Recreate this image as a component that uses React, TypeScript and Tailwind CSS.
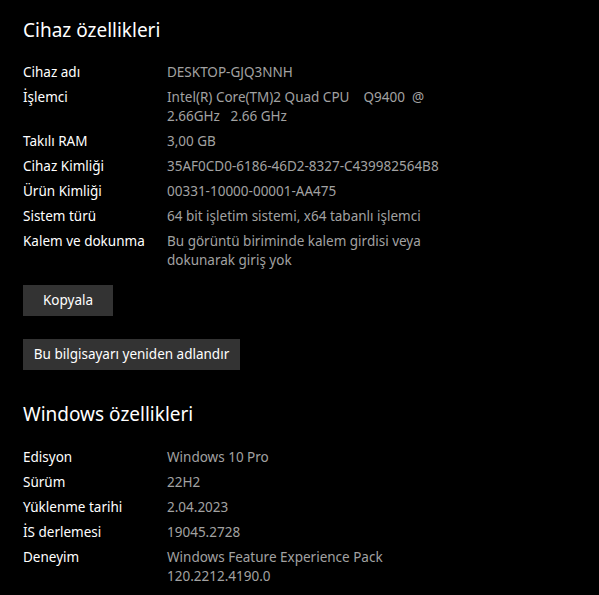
const device: { label: string; value: React.ReactNode }[] = [
  { label: 'Cihaz adı', value: 'DESKTOP-GJQ3NNH' },
  {
    label: 'İşlemci',
    value: (
      <>
        {'Intel(R) Core(TM)2 Quad CPU    Q9400  @'}
        <br />
        {'2.66GHz   2.66 GHz'}
      </>
    ),
  },
  { label: 'Takılı RAM', value: '3,00 GB' },
  { label: 'Cihaz Kimliği', value: '35AF0CD0-6186-46D2-8327-C439982564B8' },
  { label: 'Ürün Kimliği', value: '00331-10000-00001-AA475' },
  { label: 'Sistem türü', value: '64 bit işletim sistemi, x64 tabanlı işlemci' },
  {
    label: 'Kalem ve dokunma',
    value: (
      <>
        Bu görüntü biriminde kalem girdisi veya
        <br />
        dokunarak giriş yok
      </>
    ),
  },
];

const windows: { label: string; value: React.ReactNode }[] = [
  { label: 'Edisyon', value: 'Windows 10 Pro' },
  { label: 'Sürüm', value: '22H2' },
  { label: 'Yüklenme tarihi', value: '2.04.2023' },
  { label: 'İS derlemesi', value: '19045.2728' },
  {
    label: 'Deneyim',
    value: (
      <>
        Windows Feature Experience Pack
        <br />
        120.2212.4190.0
      </>
    ),
  },
];

function InfoRows({ rows }: { rows: { label: string; value: React.ReactNode }[] }) {
  return (
    <div className="flex flex-col gap-[6px]">
      {rows.map((row) => (
        <div key={row.label} className="flex text-[13.5px] leading-[19px]">
          <div className="w-[144px] flex-shrink-0 text-white">{row.label}</div>
          <div className="text-[#a2a2a2] whitespace-pre">{row.value}</div>
        </div>
      ))}
    </div>
  );
}

export default function App() {
  return (
    <div
      className="w-[599px] h-[595px] bg-black overflow-hidden pl-[23px] pt-[16px]"
      style={{ fontFamily: '"Noto Sans", "Open Sans", sans-serif' }}
    >
      <h1 className="text-[19px] leading-[28px] text-white">Cihaz özellikleri</h1>

      <div className="mt-[19px]">
        <InfoRows rows={device} />
      </div>

      <button className="mt-[15px] block w-[90px] h-[31px] bg-[#333333] text-white text-[13.5px]">
        Kopyala
      </button>

      <button className="mt-[23px] block w-[217px] h-[31px] bg-[#333333] text-white text-[13.5px]">
        Bu bilgisayarı yeniden adlandır
      </button>

      <h2 className="mt-[30px] text-[19px] leading-[28px] text-white">Windows özellikleri</h2>

      <div className="mt-[20px]">
        <InfoRows rows={windows} />
      </div>
    </div>
  );
}
